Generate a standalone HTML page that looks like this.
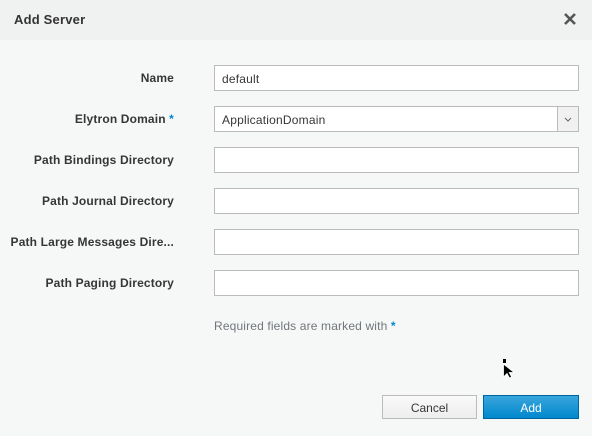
<!DOCTYPE html>
<html><head><style>
body{margin:0;width:592px;height:436px;background:#f6f8f7;font-family:"Liberation Sans",sans-serif;font-size:12px;color:#363636;position:relative;overflow:hidden}
.hdr{position:absolute;left:0;top:0;width:592px;height:40px;background:#f0f2f1}
.hdr h4{position:absolute;left:14px;top:12px;margin:0;font-size:13px;font-weight:bold;color:#333;letter-spacing:0.2px}
.x{position:absolute;left:562px;top:11px}
.lbl{position:absolute;right:418px;font-weight:bold;font-size:12px;color:#363636;white-space:nowrap;letter-spacing:0.15px}
.in{position:absolute;left:214px;width:363px;height:24px;border:1px solid #bbb;background:#fff;box-sizing:content-box}
.in span{position:absolute;left:7px;top:6px;letter-spacing:0.2px}
.star{color:#0088ce}
.btn{position:absolute;top:395px;height:24px;box-sizing:border-box;text-align:center;line-height:24px;font-size:12px}
</style></head><body>
<div class="hdr"><h4>Add Server</h4>
<svg class="x" width="16" height="16" viewBox="0 0 16 16"><path d="M3 3L13 13M13 3L3 13" stroke="#555" stroke-width="2.6"/></svg></div>

<div class="lbl" style="top:71px">Name</div>
<div class="in" style="top:65px"><span>default</span></div>

<div class="lbl" style="top:112px">Elytron Domain <span class="star">*</span></div>
<div class="in" style="top:106px"><span>ApplicationDomain</span>
<div style="position:absolute;right:0;top:0;width:20px;height:24px;border-left:1px solid #bbb;background:#f1f1f1"><svg width="20" height="24"><path d="M7 11l3 3 3-3" stroke="#666" fill="none"/></svg></div></div>

<div class="lbl" style="top:153px">Path Bindings Directory</div>
<div class="in" style="top:147px"></div>
<div class="lbl" style="top:194px">Path Journal Directory</div>
<div class="in" style="top:188px"></div>
<div class="lbl" style="top:235px">Path Large Messages Dire...</div>
<div class="in" style="top:229px"></div>
<div class="lbl" style="top:276px">Path Paging Directory</div>
<div class="in" style="top:270px"></div>

<div style="position:absolute;left:214px;top:319px;color:#72767b;letter-spacing:0.15px">Required fields are marked with <span class="star" style="font-weight:bold">*</span></div>

<svg style="position:absolute;left:502px;top:359px" width="16" height="22"><rect x="1" y="0" width="3" height="4" fill="#000"/><path d="M1.5 5v13l3.5-3.5 2.5 4.5 2.2-1-2.5-4.5h5z" fill="#000" stroke="#fff" stroke-width="0.8"/></svg>

<div class="btn" style="left:382px;width:95px;border:1px solid #bbb;background:linear-gradient(#fafafa,#ededed);color:#363636">Cancel</div>
<div class="btn" style="left:483px;width:96px;border:1px solid #00659c;background:linear-gradient(#39a5dc,#0088ce);color:#fff">Add</div>
</body></html>
